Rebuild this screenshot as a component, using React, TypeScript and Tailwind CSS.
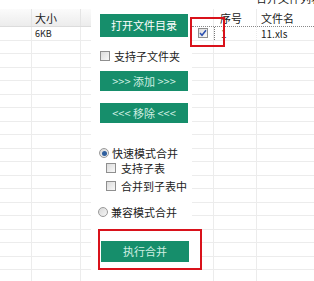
import React from 'react';

const font = { fontFamily: '"Noto Sans CJK SC", "Liberation Sans", sans-serif' };
const rows = Array.from({ length: 19 });

const Box: React.FC<{ checked?: boolean }> = ({ checked }) => (
  <div className="w-[10px] h-[10px] border border-[#8f8f8f] bg-gradient-to-br from-[#dcdcdc] to-[#f8f8f8] flex items-center justify-center">
    {checked && (
      <svg width="8" height="8" viewBox="0 0 8 8">
        <path d="M1 4 L3 6.3 L7 1.2" fill="none" stroke="#2b4fb0" strokeWidth="1.5" />
      </svg>
    )}
  </div>
);

const Radio: React.FC<{ checked?: boolean }> = ({ checked }) => (
  <div className="w-[10px] h-[10px] rounded-full border border-[#9a9a9a] bg-gradient-to-br from-[#d8d8d8] to-[#f6f6f6] flex items-center justify-center">
    {checked && <div className="w-[5px] h-[5px] rounded-full bg-[#2f5f9e]" />}
  </div>
);

const GreenButton: React.FC<{ label: string; h: string; light?: boolean }> = ({ label, h, light }) => (
  <div className={`w-[88px] ${h} bg-[#168e6b] flex items-center justify-center text-[11px] ${light ? 'text-[#cfeee2]' : 'text-white'}`}>
    {label}
  </div>
);

export default function App() {
  return (
    <div className="w-[314px] h-[281px] overflow-hidden bg-white flex text-[11px] text-[#222]" style={font}>
      {/* left table */}
      <div className="w-[91px] shrink-0 pt-[9px]">
        <div className="h-[18px] flex bg-gradient-to-b from-[#fbfbfb] to-[#ececec] border-b border-[#dcdcdc]">
          <div className="w-[32px] border-r border-[#e4e4e4]" />
          <div className="w-[49px] border-r border-[#e4e4e4] pl-[3px] leading-[18px]">大小</div>
          <div className="flex-1" />
        </div>
        {rows.map((_, i) => (
          <div key={i} className="h-[13.5px] flex border-b border-[#ececec]">
            <div className="w-[32px] border-r border-[#ececec]" />
            <div className="w-[49px] border-r border-[#ececec] pl-[3px] text-[9px] leading-[13px]">{i === 0 ? '6KB' : ''}</div>
            <div className="flex-1" />
          </div>
        ))}
      </div>

      {/* middle panel */}
      <div className="w-[101px] shrink-0 pl-[9px] pt-[14px] flex flex-col">
        <GreenButton label="打开文件目录" h="h-[23px]" />
        <div className="mt-[12px] h-[14px] flex items-center gap-[4px]">
          <Box />
          <span>支持子文件夹</span>
        </div>
        <div className="mt-[8px]">
          <GreenButton label=">>> 添加 >>>" h="h-[20px]" light />
        </div>
        <div className="mt-[12px]">
          <GreenButton label="<<< 移除 <<<" h="h-[20px]" light />
        </div>
        <div className="mt-[23px] h-[14px] flex items-center gap-[3px] -ml-[1px]">
          <Radio checked />
          <span>快速模式合并</span>
        </div>
        <div className="mt-[1px] h-[14px] flex items-center gap-[5px] pl-[6px]">
          <Box />
          <span>支持子表</span>
        </div>
        <div className="mt-[4px] h-[14px] flex items-center gap-[5px] pl-[6px]">
          <Box />
          <span>合并到子表中</span>
        </div>
        <div className="mt-[12px] h-[14px] flex items-center gap-[3px] -ml-[2px]">
          <Radio />
          <span>兼容模式合并</span>
        </div>
        <div className="mt-[10px] -ml-[2px] w-[104px] h-[41px] shrink-0 border-2 border-[#d9121b] bg-white relative z-10 pt-[10px] pl-[1px]">
          <GreenButton label="执行合并" h="h-[21px]" light />
        </div>
      </div>

      {/* right table */}
      <div className="flex-1 relative pt-[9px]">
        <div className="absolute -top-[10px] left-[64px] text-[11px] whitespace-nowrap">合并文件列表</div>
        <div className="h-[18px] flex border-b border-dotted border-[#888]">
          <div className="w-[22px] border-r border-[#ececec]" />
          <div className="w-[43px] border-r border-[#ececec] pl-[6px] leading-[18px]">序号</div>
          <div className="flex-1 pl-[4px] leading-[18px]">文件名</div>
        </div>
        {rows.map((_, i) => (
          <div key={i} className="h-[13.5px] flex border-b border-[#ececec]">
            <div className="w-[22px] border-r border-[#ececec] flex items-center justify-center pl-[1px]">
              {i === 0 && <Box checked />}
            </div>
            <div className={`w-[43px] border-r border-[#ececec] pl-[6px] text-[10px] leading-[13px] ${i === 0 ? 'border-l border-l-[#777] border-dotted' : ''}`}>
              {i === 0 ? '1' : ''}
            </div>
            <div className="flex-1 pl-[4px] text-[10px] leading-[13px]">{i === 0 ? '11.xls' : ''}</div>
          </div>
        ))}
        <div className="absolute left-[-2px] top-[17px] w-[35px] h-[30px] border-2 border-[#d9121b]" />
      </div>
    </div>
  );
}
